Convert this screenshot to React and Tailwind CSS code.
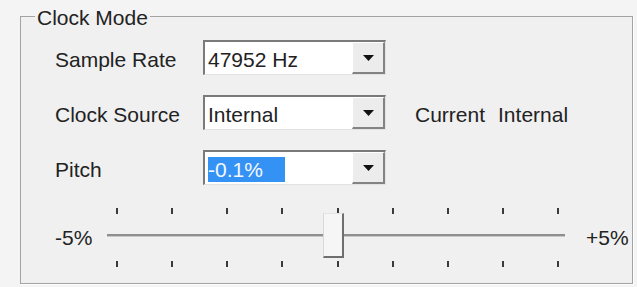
import React from 'react';

const FONT = { fontFamily: '"Liberation Sans", Arial, sans-serif' };

// combo box in the old Windows look
function Combo({ value, selected }) {
  return (
    <div className="flex w-[183px] h-[35px] bg-white border-t-2 border-l-2 border-t-[#7a7a7a] border-l-[#7a7a7a] border-b border-r border-b-[#e2e2e2] border-r-[#e2e2e2]">
      <div className="flex-1 flex items-center pl-[3px] pt-[3px]">
        {selected ? (
          <span className="inline-flex items-center w-[77px] h-[25px] bg-[#3592f5] text-[#f4f8ff]">{value}</span>
        ) : (
          <span>{value}</span>
        )}
      </div>
      <div className="w-[33px] flex items-center justify-center bg-[#ececec] border-l border-t border-l-white border-t-white border-r-2 border-b-2 border-r-[#838383] border-b-[#838383]">
        <svg width="11" height="6" viewBox="0 0 11 6">
          <polygon points="0,0 11,0 5.5,6" fill="#111" />
        </svg>
      </div>
    </div>
  );
}

function Ticks() {
  const ticks = Array.from({ length: 9 });
  return (
    <div className="flex justify-between items-center pl-[9px] pr-[6px] h-[7px]">
      {ticks.map((_, i) => (
        <div key={i} className="w-[2px] h-[6px] bg-[#3a3a3a]" />
      ))}
    </div>
  );
}

export default function App() {
  const rows = [
    { label: 'Sample Rate', value: '47952 Hz' },
    { label: 'Clock Source', value: 'Internal', extra: true },
    { label: 'Pitch', value: '-0.1%', selected: true },
  ];

  return (
    <div className="w-[637px] h-[287px] bg-[#f4f4f4] pl-[20px] pt-[4px] text-[21px] text-[#222]" style={FONT}>
      <fieldset className="w-[613px] h-[280px] bg-[#f0f0f0] border border-[#a3a3a3] shadow-[1px_1px_0_#ffffff]">
        <legend className="ml-[14px] px-[2px] leading-[24px]">
          <span className="relative top-[2px]">Clock Mode</span>
        </legend>

        <div className="flex flex-col gap-[20px] mt-[12px] pl-[34px]">
          {rows.map((r) => (
            <div key={r.label} className="flex items-center h-[35px]">
              <div className="w-[148px] pt-[4px]">{r.label}</div>
              <Combo value={r.value} selected={r.selected} />
              {r.extra && (
                <div className="flex gap-[13px] ml-[29px] pt-[4px]">
                  <span>Current</span>
                  <span>Internal</span>
                </div>
              )}
            </div>
          ))}
        </div>

        {/* pitch slider */}
        <div className="flex items-center mt-[22px] pl-[34px]">
          <div className="w-[52px] pt-[2px]">-5%</div>
          <div className="relative w-[458px] flex flex-col">
            <Ticks />
            <div className="mt-[20px] h-[3px] bg-[#8e8e8e] border-b border-b-[#c8c8c8]" />
            <div className="mt-[23px]">
              <Ticks />
            </div>
            <div className="absolute left-[216px] top-[6px] w-[21px] h-[45px] bg-[#f6f6f6] border-l border-t border-l-[#d8d8d8] border-t-[#e4e4e4] border-r-2 border-b-2 border-r-[#6f6f6f] border-b-[#6f6f6f]" />
          </div>
          <div className="ml-[21px] pt-[2px]">+5%</div>
        </div>
      </fieldset>
    </div>
  );
}
